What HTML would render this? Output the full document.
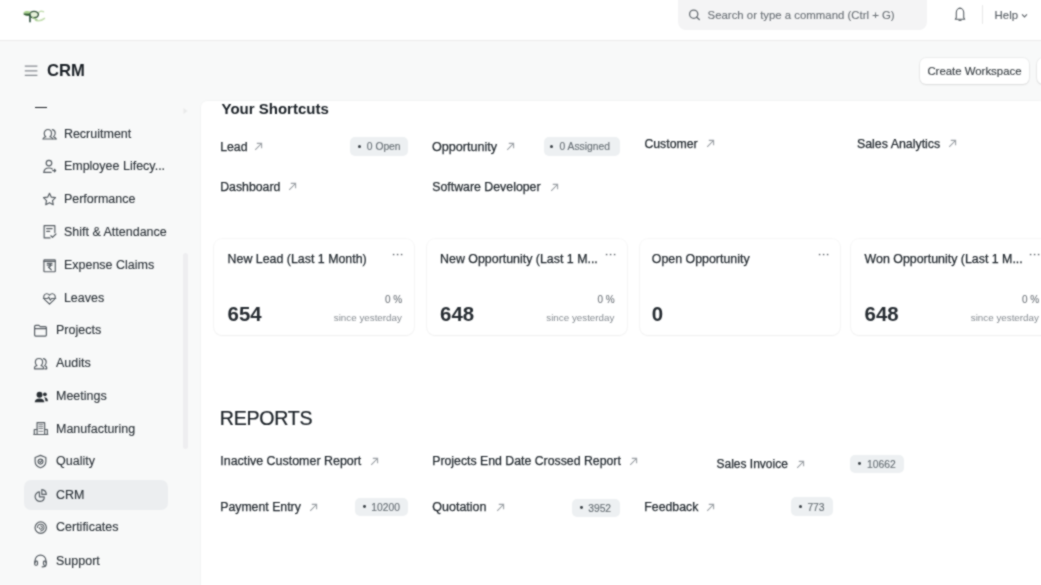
<!DOCTYPE html>
<html><head><meta charset="utf-8"><title>CRM</title>
<style>
html,body{margin:0;padding:0;width:1041px;height:585px;overflow:hidden;background:#f8f9f9;}
body{position:relative;font-family:"Liberation Sans",sans-serif;}
.t{position:absolute;white-space:nowrap;line-height:20px;font-family:"Liberation Sans",sans-serif;}
.r{position:absolute;box-sizing:border-box;}
svg.r{overflow:visible}
#root{position:absolute;left:0;top:0;width:1041px;height:585px;overflow:hidden;background:#f8f9f9;filter:url(#soft);}
</style></head><body><svg width="0" height="0" style="position:absolute"><filter id="soft" x="0" y="0" width="100%" height="100%" filterUnits="userSpaceOnUse" color-interpolation-filters="sRGB"><feConvolveMatrix order="3" kernelMatrix="1 2 1 2 8 2 1 2 1" divisor="20" edgeMode="duplicate" preserveAlpha="true"/></filter></svg><div id="root">
<div class="r" style="left:0px;top:0px;width:1041px;height:40px;background:#fff;border-bottom:1px solid #ececec;box-sizing:border-box;height:41px"></div>
<svg class="r" style="left:18px;top:4px" width="32" height="24" viewBox="0 0 32 24">
<path d="M25.5 7.6 C23 6.6 20.8 7.4 20.3 9.5 M17.5 16.2 C20.5 17.2 24 16.5 26.5 14.4" fill="none" stroke="#c3ddb0" stroke-width="1.5" stroke-linecap="round"/>
<ellipse cx="16" cy="10.6" rx="4.4" ry="3.2" fill="#e6f1da" stroke="#34523a" stroke-width="1.4"/>
<path d="M5.6 8.2 C7.5 6.6 10.5 6.7 12.3 7.6 L12.3 9.6 L5.6 9.6 Z" fill="#a9d38c"/>
<path d="M5.6 9.4 L12.3 9.4 L12.3 11.6 C10 12.2 7.2 11.6 5.6 10.6 Z" fill="#2e5a2e"/>
<path d="M12 11 V17.6" stroke="#3a5a48" stroke-width="1.7" stroke-linecap="round"/>
<path d="M14.5 13.5 L19 15.8" stroke="#9cc585" stroke-width="1.3" stroke-linecap="round"/>
</svg>
<div class="r" style="left:678px;top:-8px;width:249px;height:38px;background:#f4f4f5;border-radius:8px"></div>
<svg class="r" style="left:684px;top:4px" width="24" height="22" viewBox="0 0 24 22">
<circle cx="9.7" cy="10.2" r="4.1" fill="none" stroke="#686e74" stroke-width="1.3"/>
<path d="M12.7 13.2 L15.3 15.6" stroke="#686e74" stroke-width="1.4" stroke-linecap="round"/></svg>
<div class="t" style="left:707.6px;top:5.35px;font-size:11.4px;font-weight:400;color:#6a7076;-webkit-text-stroke:0.12px #6a7076;">Search or type a command (Ctrl + G)</div>
<svg class="r" style="left:948px;top:2px" width="24" height="24" viewBox="0 0 24 24">
<path d="M7.3 17.2 L8.3 15.6 V10.5 C8.3 8.3 10 6.2 12 6.1 C14 6.2 15.7 8.3 15.7 10.5 V15.6 L16.7 17.2 Z" fill="none" stroke="#5a6066" stroke-width="1.1" stroke-linejoin="round"/>
<path d="M10.6 17.8 C10.9 18.8 13.1 18.8 13.4 17.8" fill="none" stroke="#5a6066" stroke-width="1.1"/></svg>
<div class="r" style="left:981.5px;top:4.5px;width:1.0px;height:19.5px;background:#e8e8e8"></div>
<div class="t" style="left:994.6px;top:4.65px;font-size:11.4px;font-weight:400;color:#565d63;-webkit-text-stroke:0.12px #565d63;">Help</div>
<svg class="r" style="left:1020px;top:12px" width="9" height="7" viewBox="0 0 9 7">
<path d="M2 2.3 L4.5 4.9 L7 2.3" fill="none" stroke="#60666c" stroke-width="1.1"/></svg>
<svg class="r" style="left:24px;top:64px" width="15" height="13" viewBox="0 0 15 13">
<path d="M0.8 2.1 H13.4 M0.8 6.9 H13.4 M0.8 11.4 H13.4" stroke="#858b91" stroke-width="1.1"/></svg>
<div class="t" style="left:47.0px;top:61.15px;font-size:16.6px;font-weight:700;color:#1a2026;">CRM</div>
<div class="r" style="left:919.5px;top:57.5px;width:109.0px;height:26.5px;background:#fff;border-radius:6px;box-shadow:0 0 0 1px rgba(0,0,0,0.045),0 1px 2px rgba(0,0,0,0.08)"></div>
<div class="t" style="left:927.4px;top:61.25px;font-size:11.4px;font-weight:400;color:#3a4045;-webkit-text-stroke:0.15px #3a4045;">Create Workspace</div>
<div class="r" style="left:1037px;top:57.5px;width:23px;height:26.5px;background:#fff;border-radius:6px;box-shadow:0 0 0 1px rgba(0,0,0,0.045),0 1px 2px rgba(0,0,0,0.08)"></div>
<div class="r" style="left:35.3px;top:107.1px;width:12.200000000000003px;height:1.3000000000000114px;background:#1f2428"></div>
<div class="r" style="left:182.5px;top:252.5px;width:5.0px;height:196.5px;background:#eeeef0;border-radius:3px"></div>
<svg class="r" style="left:182px;top:107px" width="7" height="8" viewBox="0 0 7 8"><path d="M1.5 1 L5.5 4 L1.5 7 Z" fill="#e9eaea"/></svg>
<div class="r" style="left:24px;top:480px;width:144px;height:30px;background:#eceef0;border-radius:7px"></div>
<svg class="r" style="left:41.5px;top:126.75px" width="15" height="15" viewBox="0 0 14 14" fill="none" stroke="#575e64" stroke-width="1.1" stroke-linecap="round" stroke-linejoin="round"><path d="M1.2 10.9 C1.6 9.6 2.6 9.3 3.6 9.1 C2.6 8.4 2.1 7.3 2.1 6 C2.1 3.9 3.6 2.3 5.5 2.3 C7.4 2.3 8.9 3.9 8.9 6 C8.9 7.3 8.4 8.4 7.4 9.1 C8.4 9.3 9.4 9.6 9.8 10.9"/><path d="M9.7 2.4 C11.4 2.7 12.4 4.1 12.3 5.9 C12.2 7.2 11.7 8.3 10.8 9 C11.8 9.3 12.6 9.9 13 10.9"/><path d="M0.9 11.2 H13.3"/></svg>
<div class="t" style="left:63.9px;top:124.02px;font-size:12.5px;font-weight:400;color:#2b3238;-webkit-text-stroke:0.12px #2b3238;">Recruitment</div>
<svg class="r" style="left:41.5px;top:159.14px" width="15" height="15" viewBox="0 0 14 14" fill="none" stroke="#575e64" stroke-width="1.1" stroke-linecap="round" stroke-linejoin="round"><circle cx="6.5" cy="3.8" r="2.6"/><path d="M1.8 12.5 C1.8 9.8 3.6 8.4 6.5 8.4 C8 8.4 9 8.7 9.6 9.3"/><path d="M1.8 12.5 H8.5"/><path d="M10 10.8 L12.8 10.8 M11.6 9.6 L12.8 10.8 L11.6 12"/></svg>
<div class="t" style="left:63.9px;top:156.41px;font-size:12.5px;font-weight:400;color:#2b3238;-webkit-text-stroke:0.12px #2b3238;">Employee Lifecy...</div>
<svg class="r" style="left:41.5px;top:191.62999999999997px" width="15" height="15" viewBox="0 0 14 14" fill="none" stroke="#575e64" stroke-width="1.1" stroke-linecap="round" stroke-linejoin="round"><path d="M7 1.2 L8.7 4.8 L12.6 5.3 L9.8 8 L10.5 11.9 L7 10 L3.5 11.9 L4.2 8 L1.4 5.3 L5.3 4.8 Z"/></svg>
<div class="t" style="left:63.9px;top:188.90px;font-size:12.5px;font-weight:400;color:#2b3238;-webkit-text-stroke:0.12px #2b3238;">Performance</div>
<svg class="r" style="left:41.5px;top:224.42px" width="15" height="15" viewBox="0 0 14 14" fill="none" stroke="#575e64" stroke-width="1.1" stroke-linecap="round" stroke-linejoin="round"><path d="M7.5 13 H2 V1.5 H12 V8"/><path d="M4.3 4.3 H9.5 M4.3 6.8 H7.2"/><path d="M8.3 11 L9.8 12.5 L13 9.3"/></svg>
<div class="t" style="left:63.9px;top:221.69px;font-size:12.5px;font-weight:400;color:#2b3238;-webkit-text-stroke:0.12px #2b3238;">Shift &amp; Attendance</div>
<svg class="r" style="left:41.5px;top:257.90999999999997px" width="15" height="15" viewBox="0 0 14 14" fill="none" stroke="#575e64" stroke-width="1.1" stroke-linecap="round" stroke-linejoin="round"><rect x="1.8" y="1.8" width="10.6" height="11" rx="0.5"/><path d="M1.8 3.1 H12.4"/><path d="M4.8 5 H9.4 M4.8 6.6 H9.4 M6.2 5 C8.6 5 8.6 8.4 6 8.4 L8.6 11"/></svg>
<div class="t" style="left:63.9px;top:255.18px;font-size:12.5px;font-weight:400;color:#2b3238;-webkit-text-stroke:0.12px #2b3238;">Expense Claims</div>
<svg class="r" style="left:41.5px;top:290.69999999999993px" width="15" height="15" viewBox="0 0 14 14" fill="none" stroke="#575e64" stroke-width="1.1" stroke-linecap="round" stroke-linejoin="round"><path d="M7 12.2 L2.6 8 C0.8 6.2 1.5 3 4 2.6 C5.3 2.4 6.3 3 7 3.9 C7.7 3 8.7 2.4 10 2.6 C12.5 3 13.2 6.2 11.4 8 Z"/><path d="M1.3 7 H5.3 L6.3 5.6 L7.8 8.6 L8.8 7 H12.8"/></svg>
<div class="t" style="left:63.9px;top:287.97px;font-size:12.5px;font-weight:400;color:#2b3238;-webkit-text-stroke:0.12px #2b3238;">Leaves</div>
<svg class="r" style="left:33.3px;top:323.09px" width="15" height="15" viewBox="0 0 14 14" fill="none" stroke="#575e64" stroke-width="1.1" stroke-linecap="round" stroke-linejoin="round"><path d="M1.5 3.2 C1.5 2.6 1.9 2.2 2.5 2.2 H5.5 L6.8 3.4 H11.5 C12.1 3.4 12.5 3.8 12.5 4.4 V11.2 C12.5 11.8 12.1 12.2 11.5 12.2 H2.5 C1.9 12.2 1.5 11.8 1.5 11.2 Z"/><path d="M1.5 5.2 H12.5"/></svg>
<div class="t" style="left:56.0px;top:320.36px;font-size:12.5px;font-weight:400;color:#2b3238;-webkit-text-stroke:0.12px #2b3238;">Projects</div>
<svg class="r" style="left:33.3px;top:355.58px" width="15" height="15" viewBox="0 0 14 14" fill="none" stroke="#575e64" stroke-width="1.1" stroke-linecap="round" stroke-linejoin="round"><path d="M1.4 12 V10.9 C1.4 9.9 2.4 9.3 3.7 9 C2.7 8.3 2.2 7.2 2.2 5.9 C2.2 3.8 3.7 2.3 5.6 2.3 C7.5 2.3 9 3.8 9 5.9 C9 7.2 8.5 8.3 7.5 9 C8.8 9.3 9.8 9.9 9.8 10.9 V12 Z"/><path d="M9.8 2.4 C11.5 2.7 12.4 4.1 12.3 5.9 C12.2 7.2 11.7 8.3 10.9 9 C12.1 9.4 12.8 10 12.8 11 V12 H11"/></svg>
<div class="t" style="left:56.0px;top:352.85px;font-size:12.5px;font-weight:400;color:#2b3238;-webkit-text-stroke:0.12px #2b3238;">Audits</div>
<svg class="r" style="left:33.3px;top:388.66999999999996px" width="15" height="15" viewBox="0 0 14 14" fill="none" stroke="#575e64" stroke-width="1.1" stroke-linecap="round" stroke-linejoin="round"><circle cx="6.1" cy="5.3" r="2.75" fill="#2a3035" stroke="none"/><circle cx="11.1" cy="4.9" r="1.75" fill="#2a3035" stroke="none"/><path d="M1.6 12.4 C1.6 10.1 3.4 8.8 6.1 8.8 C8.8 8.8 10.6 10.1 10.6 12.4 Z" fill="#2a3035" stroke="none"/><path d="M10.3 7.6 C12.6 7.6 13.9 8.9 13.9 11.4 H11.6 C11.6 9.9 11.2 8.6 10.3 7.6 Z" fill="#2a3035" stroke="none"/></svg>
<div class="t" style="left:56.0px;top:385.94px;font-size:12.5px;font-weight:400;color:#2b3238;-webkit-text-stroke:0.12px #2b3238;">Meetings</div>
<svg class="r" style="left:33.3px;top:421.46px" width="15" height="15" viewBox="0 0 14 14" fill="none" stroke="#575e64" stroke-width="1.1" stroke-linecap="round" stroke-linejoin="round"><path d="M3.8 12.6 V1.5 H10.9 V12.6"/><path d="M1.2 12.6 V7.9 H3.8 M10.9 7.9 H13.4 V12.6"/><path d="M0.8 12.6 H13.8"/><path d="M5.5 3.4 H9.2 M5.5 5.2 H9.2 M5.5 7 H9.2 M5.5 9.6 H9.2" stroke-width="0.75"/></svg>
<div class="t" style="left:56.0px;top:418.73px;font-size:12.5px;font-weight:400;color:#2b3238;-webkit-text-stroke:0.12px #2b3238;">Manufacturing</div>
<svg class="r" style="left:33.3px;top:453.94999999999993px" width="15" height="15" viewBox="0 0 14 14" fill="none" stroke="#575e64" stroke-width="1.1" stroke-linecap="round" stroke-linejoin="round"><path d="M7 1.3 L12 3.2 V7 C12 9.8 9.8 12 7 12.8 C4.2 12 2 9.8 2 7 V3.2 Z"/><circle cx="7" cy="7.1" r="2.3"/><path d="M6.2 7.1 L6.9 7.8 L8.2 6.4"/></svg>
<div class="t" style="left:56.0px;top:451.22px;font-size:12.5px;font-weight:400;color:#2b3238;-webkit-text-stroke:0.12px #2b3238;">Quality</div>
<svg class="r" style="left:33.3px;top:487.53999999999996px" width="15" height="15" viewBox="0 0 14 14" fill="none" stroke="#575e64" stroke-width="1.1" stroke-linecap="round" stroke-linejoin="round"><path d="M6 3.6 C3.5 3.8 1.8 6 2 8.4 C2.2 10.8 4.4 12.7 6.8 12.5 C9.1 12.3 10.6 10.5 10.5 8.2 H6 Z"/><path d="M8.2 1.5 C10.6 1.7 12.3 3.6 12.4 6 H8.2 Z"/></svg>
<div class="t" style="left:56.0px;top:484.81px;font-size:12.5px;font-weight:400;color:#2b3238;-webkit-text-stroke:0.12px #2b3238;">CRM</div>
<svg class="r" style="left:33.3px;top:519.5300000000001px" width="15" height="15" viewBox="0 0 14 14" fill="none" stroke="#575e64" stroke-width="1.1" stroke-linecap="round" stroke-linejoin="round"><circle cx="7.2" cy="7.1" r="5.3" stroke-width="1.15"/><path d="M4.1 7.1 A3.1 3.1 0 1 1 7.2 10.2" stroke-width="0.95"/><path d="M7.2 5.6 A1.5 1.5 0 1 1 5.7 7.1" stroke-width="0.95"/></svg>
<div class="t" style="left:56.0px;top:516.80px;font-size:12.5px;font-weight:400;color:#2b3238;-webkit-text-stroke:0.12px #2b3238;">Certificates</div>
<svg class="r" style="left:33.3px;top:553.32px" width="15" height="15" viewBox="0 0 14 14" fill="none" stroke="#575e64" stroke-width="1.1" stroke-linecap="round" stroke-linejoin="round"><path d="M2 9 V7 C2 4 4.2 1.9 7 1.9 C9.8 1.9 12 4 12 7 V9"/><rect x="1.6" y="7.6" width="2.6" height="3.8" rx="0.8"/><rect x="9.8" y="7.6" width="2.6" height="3.8" rx="0.8"/><path d="M12 11.4 C12 12.4 11 12.9 8.5 12.9"/></svg>
<div class="t" style="left:56.0px;top:550.59px;font-size:12.5px;font-weight:400;color:#2b3238;-webkit-text-stroke:0.12px #2b3238;">Support</div>
<div class="r" style="left:200.5px;top:101px;width:844.5px;height:489px;background:#fff;border-radius:6px;box-shadow:0 0 0 1px rgba(0,0,0,0.02)"></div>
<div class="t" style="left:221.5px;top:99.40px;font-size:15px;font-weight:700;color:#1a2026;">Your Shortcuts</div>
<div class="t" style="left:220.2px;top:136.74px;font-size:12.3px;font-weight:400;color:#1f262c;-webkit-text-stroke:0.25px #1f262c;">Lead</div>
<svg class="r" style="left:254px;top:142px" width="9" height="9" viewBox="0 0 9 9"><path d="M1.2 7.8 L7.6 1.4 M2.8 1.4 H7.6 V6.2" fill="none" stroke="#9ca1a6" stroke-width="1.1"/></svg>
<div class="r" style="left:350px;top:137px;width:58px;height:19px;background:#edf0f2;border-radius:5px"></div>
<div class="r" style="left:357.5px;top:144.8px;width:3.3999999999999773px;height:3.3999999999999773px;background:#3a4046;border-radius:50%"></div>
<div class="t" style="left:366.8px;top:137.43px;font-size:10.3px;font-weight:400;color:#687076;-webkit-text-stroke:0.15px #687076;">0 Open</div>
<div class="t" style="left:432.0px;top:136.83px;font-size:12.6px;font-weight:400;color:#1f262c;-webkit-text-stroke:0.25px #1f262c;">Opportunity</div>
<svg class="r" style="left:506px;top:142px" width="9" height="9" viewBox="0 0 9 9"><path d="M1.2 7.8 L7.6 1.4 M2.8 1.4 H7.6 V6.2" fill="none" stroke="#9ca1a6" stroke-width="1.1"/></svg>
<div class="r" style="left:544px;top:137px;width:76px;height:19px;background:#edf0f2;border-radius:5px"></div>
<div class="r" style="left:550.1px;top:144.8px;width:3.3999999999999773px;height:3.3999999999999773px;background:#3a4046;border-radius:50%"></div>
<div class="t" style="left:559.5px;top:137.43px;font-size:10.3px;font-weight:400;color:#687076;-webkit-text-stroke:0.15px #687076;">0 Assigned</div>
<div class="t" style="left:644.4px;top:133.64px;font-size:12.3px;font-weight:400;color:#1f262c;-webkit-text-stroke:0.25px #1f262c;">Customer</div>
<svg class="r" style="left:706px;top:139px" width="9" height="9" viewBox="0 0 9 9"><path d="M1.2 7.8 L7.6 1.4 M2.8 1.4 H7.6 V6.2" fill="none" stroke="#9ca1a6" stroke-width="1.1"/></svg>
<div class="t" style="left:856.9px;top:133.70px;font-size:12.4px;font-weight:400;color:#1f262c;-webkit-text-stroke:0.25px #1f262c;">Sales Analytics</div>
<svg class="r" style="left:948px;top:139px" width="9" height="9" viewBox="0 0 9 9"><path d="M1.2 7.8 L7.6 1.4 M2.8 1.4 H7.6 V6.2" fill="none" stroke="#9ca1a6" stroke-width="1.1"/></svg>
<div class="t" style="left:220.2px;top:176.94px;font-size:12.3px;font-weight:400;color:#1f262c;-webkit-text-stroke:0.25px #1f262c;">Dashboard</div>
<svg class="r" style="left:288px;top:182px" width="9" height="9" viewBox="0 0 9 9"><path d="M1.2 7.8 L7.6 1.4 M2.8 1.4 H7.6 V6.2" fill="none" stroke="#9ca1a6" stroke-width="1.1"/></svg>
<div class="t" style="left:432.2px;top:177.12px;font-size:12.35px;font-weight:400;color:#1f262c;-webkit-text-stroke:0.25px #1f262c;">Software Developer</div>
<svg class="r" style="left:550px;top:183px" width="9" height="9" viewBox="0 0 9 9"><path d="M1.2 7.8 L7.6 1.4 M2.8 1.4 H7.6 V6.2" fill="none" stroke="#9ca1a6" stroke-width="1.1"/></svg>
<div class="r" style="left:214px;top:239px;width:200px;height:96px;background:#fff;border-radius:8px;box-shadow:0 0 0 1px rgba(0,0,0,0.03),0 1px 2px rgba(0,0,0,0.04)"></div>
<div class="t" style="left:227.6px;top:249.10px;font-size:12.4px;font-weight:400;color:#1f262c;-webkit-text-stroke:0.25px #1f262c;">New Lead (Last 1 Month)</div>
<svg class="r" style="left:392px;top:252px" width="12" height="5" viewBox="0 0 12 5"><circle cx="1.6" cy="2.5" r="0.85" fill="#62686e"/><circle cx="5.6" cy="2.5" r="0.85" fill="#62686e"/><circle cx="9.6" cy="2.5" r="0.85" fill="#62686e"/></svg>
<div class="t" style="left:227.6px;top:303.73px;font-size:20.4px;font-weight:700;color:#252b31;">654</div>
<div class="t" style="left:385.0px;top:289.84px;font-size:10px;font-weight:400;color:#6f757b;-webkit-text-stroke:0.1px #6f757b;">0 %</div>
<div class="t" style="left:333.8px;top:308.00px;font-size:9.8px;font-weight:400;color:#858b91;">since yesterday</div>
<div class="r" style="left:426.5px;top:239px;width:200.0px;height:96px;background:#fff;border-radius:8px;box-shadow:0 0 0 1px rgba(0,0,0,0.03),0 1px 2px rgba(0,0,0,0.04)"></div>
<div class="t" style="left:440.1px;top:249.10px;font-size:12.4px;font-weight:400;color:#1f262c;-webkit-text-stroke:0.25px #1f262c;">New Opportunity (Last 1 M...</div>
<svg class="r" style="left:604.5px;top:252px" width="12" height="5" viewBox="0 0 12 5"><circle cx="1.6" cy="2.5" r="0.85" fill="#62686e"/><circle cx="5.6" cy="2.5" r="0.85" fill="#62686e"/><circle cx="9.6" cy="2.5" r="0.85" fill="#62686e"/></svg>
<div class="t" style="left:440.1px;top:303.73px;font-size:20.4px;font-weight:700;color:#252b31;">648</div>
<div class="t" style="left:597.5px;top:289.84px;font-size:10px;font-weight:400;color:#6f757b;-webkit-text-stroke:0.1px #6f757b;">0 %</div>
<div class="t" style="left:546.3px;top:308.00px;font-size:9.8px;font-weight:400;color:#858b91;">since yesterday</div>
<div class="r" style="left:639.5px;top:239px;width:200.0px;height:96px;background:#fff;border-radius:8px;box-shadow:0 0 0 1px rgba(0,0,0,0.03),0 1px 2px rgba(0,0,0,0.04)"></div>
<div class="t" style="left:651.8px;top:249.10px;font-size:12.4px;font-weight:400;color:#1f262c;-webkit-text-stroke:0.25px #1f262c;">Open Opportunity</div>
<svg class="r" style="left:817.5px;top:252px" width="12" height="5" viewBox="0 0 12 5"><circle cx="1.6" cy="2.5" r="0.85" fill="#62686e"/><circle cx="5.6" cy="2.5" r="0.85" fill="#62686e"/><circle cx="9.6" cy="2.5" r="0.85" fill="#62686e"/></svg>
<div class="t" style="left:651.8px;top:303.73px;font-size:20.4px;font-weight:700;color:#252b31;">0</div>
<div class="r" style="left:851px;top:239px;width:200px;height:96px;background:#fff;border-radius:8px;box-shadow:0 0 0 1px rgba(0,0,0,0.03),0 1px 2px rgba(0,0,0,0.04)"></div>
<div class="t" style="left:864.6px;top:249.10px;font-size:12.4px;font-weight:400;color:#1f262c;-webkit-text-stroke:0.25px #1f262c;">Won Opportunity (Last 1 M...</div>
<svg class="r" style="left:1029px;top:252px" width="12" height="5" viewBox="0 0 12 5"><circle cx="1.6" cy="2.5" r="0.85" fill="#62686e"/><circle cx="5.6" cy="2.5" r="0.85" fill="#62686e"/><circle cx="9.6" cy="2.5" r="0.85" fill="#62686e"/></svg>
<div class="t" style="left:864.6px;top:303.73px;font-size:20.4px;font-weight:700;color:#252b31;">648</div>
<div class="t" style="left:1022.0px;top:289.84px;font-size:10px;font-weight:400;color:#6f757b;-webkit-text-stroke:0.1px #6f757b;">0 %</div>
<div class="t" style="left:970.8px;top:308.00px;font-size:9.8px;font-weight:400;color:#858b91;">since yesterday</div>
<div class="t" style="left:219.8px;top:408.01px;font-size:19.6px;font-weight:400;color:#1a2026;letter-spacing:-0.25px;-webkit-text-stroke:0.22px #1a2026">REPORTS</div>
<div class="t" style="left:220.3px;top:450.69px;font-size:12.45px;font-weight:400;color:#1f262c;-webkit-text-stroke:0.25px #1f262c;">Inactive Customer Report</div>
<svg class="r" style="left:369.5px;top:457px" width="9" height="9" viewBox="0 0 9 9"><path d="M1.2 7.8 L7.6 1.4 M2.8 1.4 H7.6 V6.2" fill="none" stroke="#9ca1a6" stroke-width="1.1"/></svg>
<div class="t" style="left:432.2px;top:450.84px;font-size:12.3px;font-weight:400;color:#1f262c;-webkit-text-stroke:0.25px #1f262c;">Projects End Date Crossed Report</div>
<svg class="r" style="left:628.5px;top:457px" width="9" height="9" viewBox="0 0 9 9"><path d="M1.2 7.8 L7.6 1.4 M2.8 1.4 H7.6 V6.2" fill="none" stroke="#9ca1a6" stroke-width="1.1"/></svg>
<div class="t" style="left:716.5px;top:454.14px;font-size:12.0px;font-weight:400;color:#1f262c;-webkit-text-stroke:0.25px #1f262c;">Sales Invoice</div>
<svg class="r" style="left:795.5px;top:460px" width="9" height="9" viewBox="0 0 9 9"><path d="M1.2 7.8 L7.6 1.4 M2.8 1.4 H7.6 V6.2" fill="none" stroke="#9ca1a6" stroke-width="1.1"/></svg>
<div class="r" style="left:850px;top:454.5px;width:54px;height:18.5px;background:#edf0f2;border-radius:5px"></div>
<div class="r" style="left:857.9px;top:462.1px;width:3.3999999999999773px;height:3.2999999999999545px;background:#3a4046;border-radius:50%"></div>
<div class="t" style="left:867.0px;top:454.73px;font-size:10.3px;font-weight:400;color:#687076;-webkit-text-stroke:0.15px #687076;">10662</div>
<div class="t" style="left:220.2px;top:497.14px;font-size:12.3px;font-weight:400;color:#1f262c;-webkit-text-stroke:0.25px #1f262c;">Payment Entry</div>
<svg class="r" style="left:309px;top:503px" width="9" height="9" viewBox="0 0 9 9"><path d="M1.2 7.8 L7.6 1.4 M2.8 1.4 H7.6 V6.2" fill="none" stroke="#9ca1a6" stroke-width="1.1"/></svg>
<div class="r" style="left:354.5px;top:497.5px;width:53.80000000000001px;height:18.100000000000023px;background:#edf0f2;border-radius:5px"></div>
<div class="r" style="left:362.6px;top:504.9px;width:3.3999999999999773px;height:3.3000000000000114px;background:#3a4046;border-radius:50%"></div>
<div class="t" style="left:371.3px;top:497.53px;font-size:10.3px;font-weight:400;color:#687076;-webkit-text-stroke:0.15px #687076;">10200</div>
<div class="t" style="left:432.3px;top:496.87px;font-size:12.5px;font-weight:400;color:#1f262c;-webkit-text-stroke:0.25px #1f262c;">Quotation</div>
<svg class="r" style="left:495.5px;top:503px" width="9" height="9" viewBox="0 0 9 9"><path d="M1.2 7.8 L7.6 1.4 M2.8 1.4 H7.6 V6.2" fill="none" stroke="#9ca1a6" stroke-width="1.1"/></svg>
<div class="r" style="left:572px;top:499px;width:47.5px;height:17.5px;background:#edf0f2;border-radius:5px"></div>
<div class="r" style="left:579.7px;top:506.1px;width:3.3999999999999773px;height:3.2999999999999545px;background:#3a4046;border-radius:50%"></div>
<div class="t" style="left:588.2px;top:498.73px;font-size:10.3px;font-weight:400;color:#687076;-webkit-text-stroke:0.15px #687076;">3952</div>
<div class="t" style="left:644.3px;top:496.74px;font-size:12.3px;font-weight:400;color:#1f262c;-webkit-text-stroke:0.25px #1f262c;">Feedback</div>
<svg class="r" style="left:706px;top:503px" width="9" height="9" viewBox="0 0 9 9"><path d="M1.2 7.8 L7.6 1.4 M2.8 1.4 H7.6 V6.2" fill="none" stroke="#9ca1a6" stroke-width="1.1"/></svg>
<div class="r" style="left:791px;top:497.4px;width:42.200000000000045px;height:18.399999999999977px;background:#edf0f2;border-radius:5px"></div>
<div class="r" style="left:798.7px;top:504.9px;width:3.3999999999999773px;height:3.400000000000034px;background:#3a4046;border-radius:50%"></div>
<div class="t" style="left:807.4px;top:497.73px;font-size:10.3px;font-weight:400;color:#687076;-webkit-text-stroke:0.15px #687076;">773</div>
</div></body></html>
